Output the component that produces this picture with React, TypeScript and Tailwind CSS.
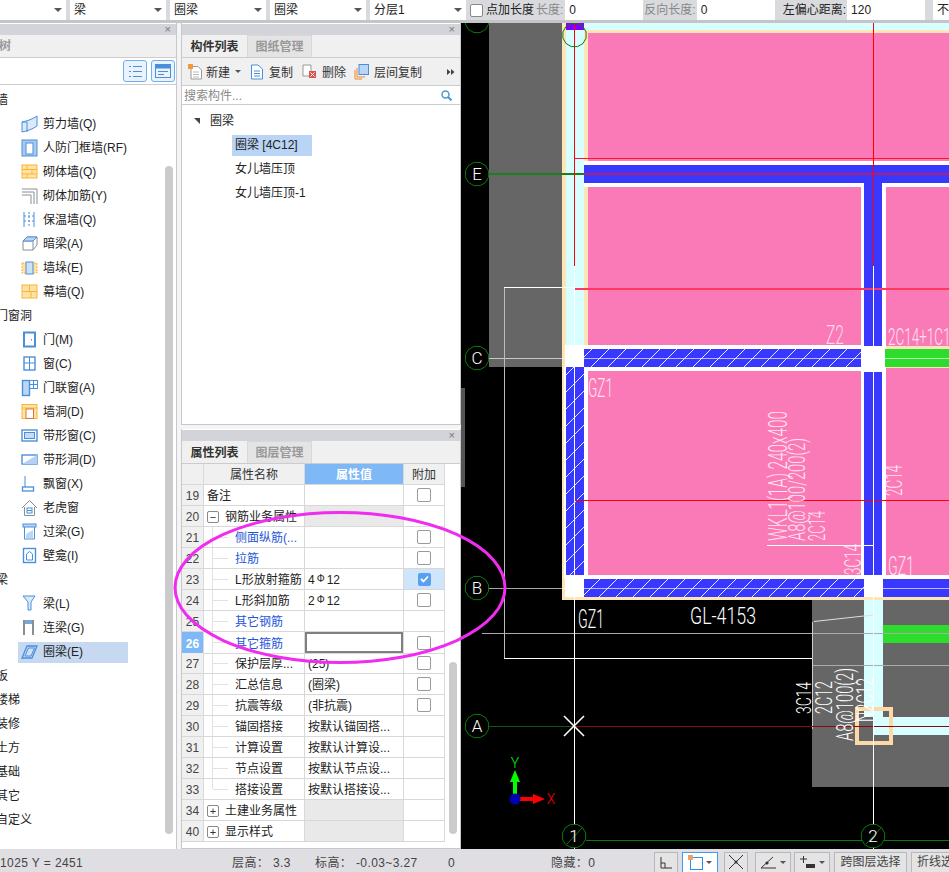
import type { ReactNode } from "react";

const BLUE = "#4a8fdc";
const ORANGE = "#fbb534";
const GRAY = "#8a8f96";

const Svg = ({ children, w = 18, h = 18 }: { children: ReactNode; w?: number; h?: number }) => (
  <svg width={w} height={h} viewBox="0 0 18 18" fill="none" className="shrink-0">
    {children}
  </svg>
);

const icons: Record<string, ReactNode> = {
  shear: (
    <Svg>
      <path d="M1 7 C6 6 12 4 16 1 V11 C12 14 6 16 1 17Z" fill="#dbe9f8" stroke={BLUE} />
      <path d="M1 7 H6 V17" stroke={BLUE} />
    </Svg>
  ),
  civil: (
    <Svg>
      <rect x="1" y="1" width="15" height="16" fill="#a9c9ee" stroke={BLUE} />
      <rect x="5" y="4" width="7" height="11" fill="#fff" stroke={BLUE} />
    </Svg>
  ),
  brick: (
    <Svg>
      <rect x="1" y="2" width="15" height="13" fill="#fde3a8" stroke={ORANGE} />
      <path d="M1 6.5 H16 M1 11 H16 M6 2 V6.5 M11 6.5 V11 M6 11 V15" stroke={ORANGE} />
    </Svg>
  ),
  rebar: (
    <Svg>
      <path d="M1 2 H16 V17 M1 5 H13 V17 M1 8 H10 V17" stroke={GRAY} />
    </Svg>
  ),
  insul: (
    <Svg>
      <path d="M3 1 V16 M13 1 V16" stroke={BLUE} />
      <path d="M8 1 V16 M3 5 H13 M3 10 H13" stroke={BLUE} strokeDasharray="2 2" />
    </Svg>
  ),
  hidden: (
    <Svg>
      <path d="M2 6 L6 2 H16 V10 L12 15 H2Z M2 6 H12 V15 M12 6 L16 2" stroke={GRAY} />
      <path d="M6 2 H16 L12 6 H2Z" fill="#bcd6f2" stroke={BLUE} />
    </Svg>
  ),
  pier: (
    <Svg>
      <rect x="1" y="4" width="15" height="10" fill="#fde3a8" stroke={ORANGE} strokeDasharray="2 1" />
      <rect x="5" y="3" width="7" height="12" fill="#cfe2f7" stroke={BLUE} />
    </Svg>
  ),
  curtain: (
    <Svg>
      <rect x="1" y="2" width="15" height="13" fill="#fde3a8" stroke={ORANGE} />
      <path d="M1 8.5 H16 M8.5 2 V8.5 M10 8.5 V15" stroke={ORANGE} />
    </Svg>
  ),
  door: (
    <Svg>
      <rect x="3" y="1.5" width="11" height="14" stroke={BLUE} strokeWidth="2" />
      <path d="M10.5 8 V9.5" stroke={BLUE} />
    </Svg>
  ),
  win: (
    <Svg>
      <rect x="3" y="2" width="11" height="13" stroke={BLUE} strokeWidth="1.4" />
      <path d="M8.5 2 V15 M3 8 H14" stroke={BLUE} />
    </Svg>
  ),
  doorwin: (
    <Svg>
      <rect x="1.5" y="1.5" width="7" height="15" fill="#bcd6f2" stroke={BLUE} strokeWidth="1.4" />
      <rect x="8.5" y="1.5" width="8" height="8" stroke={BLUE} />
      <path d="M12.5 1.5 V9.5 M8.5 5.5 H16.5" stroke={BLUE} />
    </Svg>
  ),
  opening: (
    <Svg>
      <rect x="1" y="1.5" width="15" height="14" fill="#fde3a8" stroke={ORANGE} />
      <path d="M1 5 H16" stroke={ORANGE} />
      <rect x="5" y="6" width="7.5" height="9.5" fill="#fff" stroke="#d9773a" />
    </Svg>
  ),
  strip: (
    <Svg>
      <rect x="1" y="3" width="15" height="11" stroke={BLUE} strokeWidth="1.4" />
      <rect x="3.5" y="5.5" width="10" height="6" fill="#c6dcf5" stroke={BLUE} />
    </Svg>
  ),
  stripHole: (
    <Svg>
      <rect x="1" y="4" width="15" height="9" stroke={BLUE} strokeWidth="1.4" />
      <path d="M1 13 L16 4 V13Z" fill="#b5d0f0" />
    </Svg>
  ),
  bay: (
    <Svg>
      <path d="M4 1 V12" stroke={BLUE} />
      <rect x="1.5" y="12" width="11" height="4" stroke={BLUE} strokeWidth="1.3" />
    </Svg>
  ),
  dormer: (
    <Svg>
      <path d="M1 9 L8.5 1.5 L16 9 M3.5 8 V16.5 H13.5 V8" stroke={GRAY} />
      <rect x="6" y="9" width="5" height="5" stroke={BLUE} />
      <path d="M6 11.5 H11" stroke={BLUE} />
    </Svg>
  ),
  lintel: (
    <Svg>
      <rect x="2" y="1" width="13" height="3" fill="#bcd6f2" stroke={BLUE} />
      <path d="M3.5 4 V16 H13.5 V4" stroke={BLUE} />
      <path d="M5 15 V11 L12 7 V15Z" fill="#bcd6f2" />
    </Svg>
  ),
  niche: (
    <Svg>
      <rect x="2.5" y="1.5" width="12" height="14" stroke={BLUE} strokeWidth="1.4" />
      <path d="M5.5 13 V7 L8.5 4.5 L11.5 7 V13Z" stroke={BLUE} />
    </Svg>
  ),
  beam: (
    <Svg>
      <path d="M2 1 H14 L10 7 V15 H7 V7Z" fill="#dbe9f8" stroke={BLUE} />
    </Svg>
  ),
  link: (
    <Svg>
      <rect x="2" y="1" width="11" height="4" fill="#7ba7d8" />
      <path d="M3 1 V16 M12 1 V16" stroke={GRAY} strokeWidth="2" />
    </Svg>
  ),
  ring: (
    <Svg>
      <path d="M1 15 L6 3 H16 L11 15Z" fill="#bcd6f2" stroke={BLUE} strokeWidth="1.3" />
      <path d="M4 13 L7.5 5 H13.5 L10 13Z" fill="#cfe0f3" stroke={BLUE} />
    </Svg>
  ),
};

const tree: { label: string; icon?: string; on?: boolean }[] = [
  { label: "墙" },
  { label: "剪力墙(Q)", icon: "shear" },
  { label: "人防门框墙(RF)", icon: "civil" },
  { label: "砌体墙(Q)", icon: "brick" },
  { label: "砌体加筋(Y)", icon: "rebar" },
  { label: "保温墙(Q)", icon: "insul" },
  { label: "暗梁(A)", icon: "hidden" },
  { label: "墙垛(E)", icon: "pier" },
  { label: "幕墙(Q)", icon: "curtain" },
  { label: "门窗洞" },
  { label: "门(M)", icon: "door" },
  { label: "窗(C)", icon: "win" },
  { label: "门联窗(A)", icon: "doorwin" },
  { label: "墙洞(D)", icon: "opening" },
  { label: "带形窗(C)", icon: "strip" },
  { label: "带形洞(D)", icon: "stripHole" },
  { label: "飘窗(X)", icon: "bay" },
  { label: "老虎窗", icon: "dormer" },
  { label: "过梁(G)", icon: "lintel" },
  { label: "壁龛(I)", icon: "niche" },
  { label: "梁" },
  { label: "梁(L)", icon: "beam" },
  { label: "连梁(G)", icon: "link" },
  { label: "圈梁(E)", icon: "ring", on: true },
  { label: "板" },
  { label: "楼梯" },
  { label: "装修" },
  { label: "土方" },
  { label: "基础" },
  { label: "其它" },
  { label: "自定义" },
];

type Row = {
  no: number;
  name: string;
  value?: ReactNode;
  kind?: "plain" | "group" | "child";
  open?: boolean;
  blue?: boolean;
  box?: boolean;
  checked?: boolean;
  active?: boolean;
};

const Rebar = ({ n }: { n: number }) => (
  <span>
    {n}
    <span className="relative -top-[2px] mx-[2px] text-[10px]">Φ</span>12
  </span>
);

const rows: Row[] = [
  { no: 19, name: "备注", kind: "plain", box: true },
  { no: 20, name: "钢筋业务属性", kind: "group", open: true },
  { no: 21, name: "侧面纵筋(...", kind: "child", blue: true, box: true },
  { no: 22, name: "拉筋", kind: "child", blue: true, box: true },
  { no: 23, name: "L形放射箍筋", kind: "child", value: <Rebar n={4} />, box: true, checked: true },
  { no: 24, name: "L形斜加筋", kind: "child", value: <Rebar n={2} />, box: true },
  { no: 25, name: "其它钢筋", kind: "child", blue: true },
  { no: 26, name: "其它箍筋", kind: "child", blue: true, box: true, active: true },
  { no: 27, name: "保护层厚...", kind: "child", value: "(25)", box: true },
  { no: 28, name: "汇总信息", kind: "child", value: "(圈梁)", box: true },
  { no: 29, name: "抗震等级", kind: "child", value: "(非抗震)", box: true },
  { no: 30, name: "锚固搭接", kind: "child", value: "按默认锚固搭..." },
  { no: 31, name: "计算设置", kind: "child", value: "按默认计算设..." },
  { no: 32, name: "节点设置", kind: "child", value: "按默认节点设..." },
  { no: 33, name: "搭接设置", kind: "child", value: "按默认搭接设..." },
  { no: 34, name: "土建业务属性", kind: "group" },
  { no: 40, name: "显示样式", kind: "group" },
];

const Caret = () => <span className="ml-auto mr-[4px] h-0 w-0 border-x-[4px] border-t-[4px] border-x-transparent border-t-[#555]" />;

const Combo = ({ w, text }: { w: string; text?: string }) => (
  <div className={`flex h-[20px] shrink-0 items-center bg-white pl-[4px] ${w}`}>
    <span>{text}</span>
    <Caret />
  </div>
);

const Input = ({ text, w = "w-[78px]" }: { text: string; w?: string }) => (
  <div className={`flex h-[20px] shrink-0 items-center bg-white pl-[4px] ${w}`}>{text}</div>
);

const PanelHead = () => (
  <div className="flex h-[11px] items-center justify-end bg-[#d3d4d9] pr-[5px] text-[11px] leading-none text-[#777]">×</div>
);

const Tab = ({ text, on }: { text: string; on?: boolean }) => (
  <div
    className={
      on
        ? "flex h-[22px] w-[65px] items-center justify-center pt-px font-bold text-[#333]"
        : "flex h-[22px] w-[65px] items-center justify-center border-x border-t border-[#d8d8d8] bg-[#e4e4e4] pt-px font-bold text-[#999]"
    }
  >
    {text}
  </div>
);

const Box = ({ checked }: { checked?: boolean }) =>
  checked ? (
    <span className="flex h-[13px] w-[13px] items-center justify-center rounded-[2px] bg-[#5a9ff0]">
      <svg width="9" height="8" viewBox="0 0 9 8" fill="none">
        <path d="M1 4 L3.5 6.5 L8 1.5" stroke="#fff" strokeWidth="1.8" />
      </svg>
    </span>
  ) : (
    <span className="h-[14px] w-[14px] rounded-[2px] border border-[#9a9a9a] bg-white" />
  );

const Expander = ({ open }: { open?: boolean }) => (
  <span className="mr-[6px] flex h-[12px] w-[12px] items-center justify-center rounded-[2px] border border-[#888] text-[11px] leading-none text-[#333]">
    {open ? "−" : "+"}
  </span>
);

const cell = "border-b border-r border-[#d8d8d8]";

const PropRow = ({ r }: { r: Row }) => (
  <div className="grid h-[21px] grid-cols-[22px_101px_99px_41px]">
    <div
      className={
        r.active
          ? `${cell} flex items-center justify-center bg-[#7eb8f7] pt-[2px] font-bold text-white`
          : `${cell} flex items-center justify-center bg-[#f0f0f0] pt-[2px] text-[#444]`
      }
    >
      {r.no}
    </div>
    <div className={`${cell} flex items-stretch overflow-hidden whitespace-nowrap`}>
      {r.kind === "child" ? (
        <div className="ml-[8px] flex items-center">
          <span className={r.no === 33 ? "h-1/2 w-px self-start bg-[#e2e2e2]" : "h-full w-px bg-[#e2e2e2]"} />
          <span className="h-px w-[15px] bg-[#e2e2e2]" />
          <span className={r.blue ? "ml-[7px] pt-[2px] text-[#1f55d8]" : "ml-[7px] pt-[2px] text-[#222]"}>{r.name}</span>
        </div>
      ) : (
        <div className="ml-[3px] flex items-center pt-[2px] text-[#222]">
          {r.kind === "group" && <Expander open={r.open} />}
          {r.name}
        </div>
      )}
    </div>
    <div className={`${cell} flex items-center whitespace-nowrap pl-[3px] text-[#222] ${r.kind === "group" ? "bg-[#e9e9e9]" : ""}`}>
      {r.active ? <div className="-ml-[3px] h-[21px] w-[100px] border-2 border-[#808080] bg-white" /> : <span className="pt-[2px]">{r.value}</span>}
    </div>
    <div className={`${cell} flex items-center justify-center ${r.checked ? "bg-[#cfe5fb]" : ""}`}>
      {r.box && <Box checked={r.checked} />}
    </div>
  </div>
);

const Cad = ({ x, y, w, size = 26, rot, fill = "#fff", children }: { x: number; y: number; w: number; size?: number; rot?: boolean; fill?: string; children: string }) => (
  <text
    x={x}
    y={y}
    fontSize={size}
    fontFamily="Roboto, 'Liberation Sans', sans-serif"
    fontWeight={300}
    fill={fill}
    textLength={w}
    lengthAdjust="spacingAndGlyphs"
    transform={rot ? `rotate(-90 ${x} ${y})` : undefined}
  >
    {children}
  </text>
);

const ring = (x: number, y: number, r: number) =>
  Array.from({ length: 12 }, (_, i) => {
    const a = (i * Math.PI) / 6 + Math.PI / 12;
    return `${x + r * Math.cos(a)},${y + r * Math.sin(a)}`;
  }).join(" ");

const Axis = ({ x, y, label, slash }: { x: number; y: number; label: string; slash?: boolean }) => (
  <g>
    <polygon points={ring(x, y, 12)} fill="#000" stroke="#0a7a0a" strokeWidth={1} />
    {slash && <line x1={x - 7} y1={y + 8} x2={x + 8} y2={y - 8} stroke="#0a7a0a" />}
    <text x={x} y={y + 6} textAnchor="middle" fontSize={17} fontFamily="Roboto, 'Liberation Sans', sans-serif" fontWeight={300} fill="#fff">
      {label}
    </text>
  </g>
);

const Drawing = () => (
  <svg viewBox="465 23 484 826" className="h-full w-full" preserveAspectRatio="none" shapeRendering="crispEdges">
    <defs>
      <pattern id="hatch" width="17" height="17" patternUnits="userSpaceOnUse" patternTransform="translate(4 2)">
        <rect width="17" height="17" fill="#3838ff" />
        <path d="M0 17 L17 0" stroke="#e8ecff" strokeWidth="1" shapeRendering="auto" />
      </pattern>
    </defs>
    <rect x="465" y="23" width="484" height="826" fill="#000" />
    <rect x="489" y="23" width="73" height="344" fill="#666" />
    <rect x="812" y="600" width="137" height="187" fill="#666" />

    <rect x="562" y="23" width="387" height="577" fill="#fde5b8" />
    <rect x="566" y="23" width="18" height="574" fill="#d8ffff" />
    <rect x="584" y="23" width="365" height="7" fill="#d8ffff" />
    <rect x="566" y="23" width="18" height="7" fill="#8000ff" />
    <rect x="588" y="33" width="361" height="128" fill="#f97ab6" />
    <rect x="588" y="187" width="273" height="159" fill="#f97ab6" />
    <rect x="886" y="187" width="63" height="159" fill="#f97ab6" />
    <rect x="588" y="371" width="273" height="204" fill="#f97ab6" />
    <rect x="886" y="368" width="63" height="207" fill="#f97ab6" />

    <rect x="584" y="161" width="365" height="26" fill="#fff" />
    <rect x="584" y="165" width="365" height="18" fill="#3838ff" />
    <rect x="861" y="183" width="25" height="166" fill="#fff" />
    <rect x="864" y="183" width="18" height="166" fill="#3838ff" />
    <rect x="565" y="345" width="297" height="26" fill="#fff" />
    <rect x="584" y="349" width="278" height="18" fill="url(#hatch)" />
    <rect x="564" y="367" width="24" height="212" fill="#fff" />
    <rect x="566" y="367" width="18" height="211" fill="url(#hatch)" />
    <rect x="861" y="346" width="25" height="233" fill="#fff" />
    <rect x="864" y="372" width="18" height="206" fill="#3838ff" />
    <rect x="885" y="349" width="64" height="18" fill="#2edc2e" />
    <rect x="565" y="575" width="384" height="22" fill="#fff" />
    <rect x="584" y="579" width="280" height="18" fill="url(#hatch)" />
    <rect x="883" y="579" width="66" height="18" fill="#3838ff" />

    <rect x="864" y="600" width="19" height="117" fill="#d8ffff" />
    <rect x="873" y="717" width="76" height="18" fill="#d8ffff" />
    <rect x="883" y="625" width="66" height="18" fill="#2edc2e" />
    <rect x="857" y="709" width="34" height="34" stroke="#fdd9a8" strokeWidth="4" fill="none" />

    {/* axes and construction lines */}
    <line x1="465" x2="949" y1="358.5" y2="358.5" stroke="#fff" strokeOpacity="0.65" />
    <line x1="465" x2="949" y1="588.5" y2="588.5" stroke="#fff" strokeOpacity="0.65" />
    <line x1="482" x2="949" y1="633.5" y2="633.5" stroke="#aaa" />
    <line x1="812" x2="949" y1="665.5" y2="665.5" stroke="#aaa" />
    <line x1="504.5" x2="504.5" y1="288" y2="658" stroke="#bbb" />
    <line x1="504" x2="575" y1="287.5" y2="287.5" stroke="#fff" />
    <line x1="504" x2="812" y1="658.5" y2="658.5" stroke="#fff" />
    <line x1="812.5" x2="812.5" y1="622" y2="729" stroke="#ccc" />
    <path d="M814 621.5 L873 615" stroke="#ddd" shapeRendering="auto" />

    <line x1="489" x2="584" y1="174" y2="174" stroke="#1f7f1f" strokeWidth="2" />
    <line x1="584" x2="949" y1="174" y2="174" stroke="#b02070" strokeWidth="2" />
    <line x1="575" x2="949" y1="158.5" y2="158.5" stroke="#ff1030" />
    <line x1="575" x2="949" y1="289" y2="289" stroke="#ff3860" strokeWidth="2" />
    <line x1="575" x2="949" y1="500.5" y2="500.5" stroke="#f00" />
    <line x1="489" x2="574" y1="726" y2="726" stroke="#0a5c0a" />
    <line x1="574" x2="949" y1="726" y2="726" stroke="#8a0a0a" />
    <line x1="586" x2="949" y1="840.5" y2="840.5" stroke="#0a7a0a" />
    <line x1="574.5" x2="574.5" y1="23" y2="266" stroke="#f00" />
    <line x1="873.5" x2="873.5" y1="23" y2="266" stroke="#f00" />
    <line x1="574.5" x2="574.5" y1="266" y2="849" stroke="#fff" />
    <line x1="873.5" x2="873.5" y1="266" y2="849" stroke="#fff" />
    <line x1="767" x2="873" y1="545.5" y2="545.5" stroke="#fff" />
    <path d="M564 716 L584 736 M584 716 L564 736" stroke="#fff" strokeWidth="1.6" shapeRendering="auto" />

    <g shapeRendering="auto">
      <polygon points={ring(477, 21, 12)} fill="none" stroke="#0a7a0a" />
      <polygon points={ring(574.5, 35, 12)} fill="none" stroke="#0a7a0a" />
      <Axis x={477} y={174} label="E" />
      <Axis x={477} y={358} label="C" />
      <Axis x={477} y={588} label="B" />
      <Axis x={477} y={726} label="A" />
      <Axis x={574} y={836} label="1" slash />
      <Axis x={873} y={836} label="2" slash />

      <Cad x={826} y={344} w={18} size={25} fill="#ffd6ea">Z2</Cad>
      <Cad x={888} y={345} w={70} size={23} fill="#ffe4f0">2C14+1C14</Cad>
      <Cad x={588} y={397} w={25} fill="#ffe4f0">GZ1</Cad>
      <Cad x={787} y={541} w={130} size={25} rot fill="#ffe4f0">WKL1(1A) 240x400</Cad>
      <Cad x={805} y={541} w={103} size={24} rot fill="#ffe4f0">A8@100/200(2)</Cad>
      <Cad x={825} y={541} w={30} size={24} rot fill="#ffe4f0">2C14</Cad>
      <Cad x={861} y={575} w={31} size={24} rot fill="#ffe4f0">3C14</Cad>
      <Cad x={902} y={496} w={31} size={24} rot fill="#ffe4f0">2C14</Cad>
      <Cad x={888} y={575} w={26} fill="#ffe4f0">GZ1</Cad>
      <Cad x={578} y={628} w={26}>GZ1</Cad>
      <Cad x={690} y={624} w={66} size={23}>GL-4153</Cad>
      <Cad x={811} y={714} w={32} size={21} rot>3C14</Cad>
      <Cad x={832} y={714} w={33} size={23} rot>2C12</Cad>
      <Cad x={853} y={741} w={73} size={24} rot>A8@100(2)</Cad>
      <Cad x={873} y={722} w={44} size={24} rot>N2C12</Cad>

      <path d="M515 794 V782" stroke="#0f0" strokeWidth="4" />
      <path d="M515 770 L510 782 H520Z" fill="#0f0" />
      <path d="M520 799 H534" stroke="#f00" strokeWidth="4" />
      <path d="M533 794 L545 799 L533 804Z" fill="#f00" />
      <circle cx="515" cy="799" r="5.5" fill="#0000b0" />
      <text x="515" y="768" textAnchor="middle" fontSize="14" fontFamily="Roboto, sans-serif" fontWeight={300} fill="#0f0">Y</text>
      <text x="551" y="804" textAnchor="middle" fontSize="14" fontFamily="Roboto, sans-serif" fontWeight={300} fill="#f00">X</text>
    </g>
  </svg>
);

const ToolBtn = ({ w, on, drop, children }: { w: string; on?: boolean; drop?: boolean; children: ReactNode }) => (
  <div
    className={`flex h-[21px] shrink-0 items-center justify-center gap-[3px] border ${w} ${
      on ? "border-[#3d9bf0] bg-white" : "border-[#b8b8b8] bg-[#e4e4e4]"
    }`}
  >
    {children}
    {drop && <span className="h-0 w-0 border-x-[3px] border-t-[3px] border-x-transparent border-t-[#555]" />}
  </div>
);

export default function App() {
  return (
    <div className="relative flex h-[872px] w-[949px] flex-col overflow-hidden bg-[#f4f4f4] font-['Liberation_Sans','Noto_Sans_CJK_SC',sans-serif] text-[12px] text-[#222]">
      {/* Top property toolbar */}
      <div className="flex h-[23px] shrink-0 items-start gap-[4px] overflow-hidden whitespace-nowrap border-b-[3px] border-[#c4c5c9] bg-[#d9dade]">
        <Combo w="w-[66px]" />
        <Combo w="w-[96px]" text="梁" />
        <Combo w="w-[96px]" text="圈梁" />
        <Combo w="w-[96px]" text="圈梁" />
        <Combo w="w-[96px]" text="分层1" />
        <div className="flex h-[20px] shrink-0 items-center">
          <span className="h-[13px] w-[13px] rounded-[2px] border border-[#888] bg-white" />
          <span className="ml-[3px]">点加长度</span>
          <span className="ml-[2px] mr-[2px] text-[#888]">长度:</span>
          <Input text="0" />
          <span className="ml-[1px] mr-[1px] text-[#888]">反向长度:</span>
          <Input text="0" />
          <span className="ml-[8px] mr-[1px]">左偏心距离:</span>
          <Input text="120" />
          <Input text="不偏移" w="ml-[8px] w-[60px]" />
        </div>
      </div>

      <div className="flex min-h-0 flex-1">
        {/* Left: module tree */}
        <div className="relative flex w-[177px] shrink-0 flex-col border-r border-[#c8c8cc] bg-white">
          <div className="mt-px"><PanelHead /></div>
          <div className="flex h-[23px] items-center border-b border-[#ccc] bg-[#f0f0f0] font-bold text-[#999]">
            <span className="-ml-[1px]">树</span>
          </div>
          <div className="flex h-[27px] items-center justify-end gap-[4px] border-b border-[#ccc] pr-[1px]">
            <span className="flex h-[22px] w-[24px] items-center justify-center rounded-[3px] border border-[#6bb0f0] bg-[#eaf3fd]">
              <svg width="15" height="13" viewBox="0 0 15 13" fill="none">
                <path d="M1 1.5 H3 M1 6.5 H3 M1 11.5 H3 M5 1.5 H14 M5 6.5 H14 M5 11.5 H14" stroke="#4a8fdc" />
              </svg>
            </span>
            <span className="flex h-[22px] w-[24px] items-center justify-center rounded-[3px] border border-[#6bb0f0] bg-[#eaf3fd]">
              <svg width="16" height="14" viewBox="0 0 16 14" fill="none">
                <rect x="0.5" y="0.5" width="15" height="13" stroke="#4a8fdc" />
                <rect x="0.5" y="0.5" width="15" height="4" fill="#4a8fdc" />
                <path d="M3 7.5 H13 M3 10.5 H9" stroke="#4a8fdc" />
              </svg>
            </span>
          </div>
          <div className="flex-1 overflow-hidden pt-[3px]">
            {tree.map((t) =>
              t.icon ? (
                <div key={t.label} className="flex h-[24px] items-center pl-[18px]">
                  <div className={`flex h-[21px] w-[110px] items-center gap-[3px] whitespace-nowrap pl-[3px] ${t.on ? "bg-[#c6d9f1]" : ""}`}>
                    {icons[t.icon]}
                    <span className="ml-[1px]">{t.label}</span>
                  </div>
                </div>
              ) : (
                <div key={t.label} className="-ml-[4px] flex h-[24px] items-center">
                  {t.label}
                </div>
              )
            )}
          </div>
          <div className="absolute right-[3px] top-[143px] h-[668px] w-[8px] rounded-[4px] bg-[#cbcbcb]" />
        </div>

        <div className="w-[4px] shrink-0" />

        {/* Middle: component list + properties */}
        <div className="flex w-[280px] shrink-0 flex-col gap-[4px]">
          <div className="flex h-[402px] shrink-0 flex-col border-x border-b border-[#c8c8cc] bg-white">
            <div className="mt-px"><PanelHead /></div>
            <div className="flex h-[23px] border-b border-[#ccc] bg-[#f0f0f0]">
              <Tab text="构件列表" on />
              <Tab text="图纸管理" />
            </div>
            <div className="flex h-[28px] items-center whitespace-nowrap border-b border-[#ccc] bg-[#f0f0f0] pl-[6px] text-[#333]">
              <svg width="15" height="16" viewBox="0 0 15 16" fill="none">
                <path d="M3 2.5 H10 L13.5 6 V15 H3Z" fill="#fff" stroke="#9a9a9a" />
                <path d="M5 8 H11 M5 10.5 H11 M5 13 H11" stroke="#bbb" />
                <rect x="0" y="0" width="5" height="5" fill="#f59a3c" />
              </svg>
              <span className="ml-[3px] pt-[2px]">新建</span>
              <span className="ml-[5px] h-0 w-0 border-x-[3px] border-t-[3px] border-x-transparent border-t-[#555]" />
              <svg className="ml-[9px]" width="14" height="16" viewBox="0 0 14 16" fill="none">
                <path d="M1.5 1 H8 L12.5 5 V15 H1.5Z" fill="#fff" stroke="#4a8fdc" />
                <path d="M4 7 H10 M4 9.5 H10 M4 12 H10" stroke="#4a8fdc" />
              </svg>
              <span className="ml-[5px] pt-[2px]">复制</span>
              <svg className="ml-[9px]" width="15" height="15" viewBox="0 0 15 15" fill="none">
                <path d="M1 1 H9 V12 H1Z" fill="#fff" stroke="#999" />
                <rect x="7" y="7" width="7" height="7" fill="#d9534f" />
                <path d="M8.5 8.5 L12.5 12.5 M12.5 8.5 L8.5 12.5" stroke="#fff" />
              </svg>
              <span className="ml-[5px] pt-[2px]">删除</span>
              <svg className="ml-[8px]" width="15" height="16" viewBox="0 0 15 16" fill="none">
                <path d="M1 6 V15 H8 M3 4 V13 H11" stroke="#f0882c" />
                <rect x="5" y="0.5" width="9.5" height="10" fill="#b9d6f6" stroke="#4a8fdc" />
              </svg>
              <span className="ml-[5px] pt-[2px]">层间复制</span>
              <svg className="ml-auto mr-[5px]" width="8" height="6" viewBox="0 0 8 6" fill="#444">
                <path d="M0 0 L3.5 3 L0 6Z M4 0 L7.5 3 L4 6Z" />
              </svg>
            </div>
            <div className="flex h-[19px] items-center justify-between border-b border-[#ccc] px-[2px] text-[#8a8a8a]">
              <span className="pt-[2px]">搜索构件...</span>
              <svg className="mr-[6px]" width="11" height="11" viewBox="0 0 11 11" fill="none">
                <circle cx="4.5" cy="4.5" r="3.5" stroke="#4a9ad8" strokeWidth="1.5" />
                <path d="M7 7 L10.5 10.5" stroke="#4a9ad8" strokeWidth="2" />
              </svg>
            </div>
            <div className="flex flex-col pt-[4px]">
              <div className="flex h-[24px] items-center pl-[12px]">
                <span className="h-0 w-0 border-l-[6px] border-t-[6px] border-l-transparent border-t-[#444]" />
                <span className="ml-[10px]">圈梁</span>
              </div>
              <div className="flex h-[24px] items-center pl-[50px]">
                <span className="flex h-[21px] w-[80px] items-center bg-[#b9d4f4] pl-[3px]">圈梁 [4C12]</span>
              </div>
              <div className="flex h-[24px] items-center pl-[53px]">女儿墙压顶</div>
              <div className="flex h-[24px] items-center pl-[53px]">女儿墙压顶-1</div>
            </div>
          </div>

          <div className="relative flex min-h-0 flex-1 flex-col border-x border-b border-[#c8c8cc] bg-white">
            <div className="mt-px"><PanelHead /></div>
            <div className="flex h-[23px] border-b border-[#ccc] bg-[#f0f0f0]">
              <Tab text="属性列表" on />
              <Tab text="图层管理" />
            </div>
            <div className="grid h-[21px] grid-cols-[22px_101px_99px_41px]">
              <div className={`${cell} bg-[#f0f0f0]`} />
              <div className={`${cell} flex items-center justify-center bg-[#f0f0f0] pt-[2px] text-[#333]`}>属性名称</div>
              <div className={`${cell} flex items-center justify-center bg-[#7eb8f7] pt-[2px] font-bold text-white`}>属性值</div>
              <div className={`${cell} flex items-center justify-center bg-[#f0f0f0] pt-[2px] text-[#333]`}>附加</div>
            </div>
            {rows.map((r) => (
              <PropRow key={r.no} r={r} />
            ))}
            <div className="absolute right-[3px] top-[233px] h-[172px] w-[8px] rounded-[4px] bg-[#cbcbcb]" />
          </div>
        </div>

        {/* Splitter */}
        <div className="flex w-[4px] shrink-0 flex-col bg-black">
          <div className="mt-[365px] h-[99px] bg-[#555]" />
        </div>

        {/* CAD canvas */}
        <div className="min-w-0 flex-1">
          <Drawing />
        </div>
      </div>

      {/* Status bar */}
      <div className="flex h-[23px] shrink-0 items-center overflow-hidden whitespace-nowrap bg-[#dfdfe3] tracking-[0.4px] text-[#444]">
        <span className="w-[232px] shrink-0 pt-[5px]">1025 Y = 2451</span>
        <span className="w-[83px] shrink-0 pt-[5px]">层高： 3.3</span>
        <span className="w-[133px] shrink-0 pt-[5px]">标高： -0.03~3.27</span>
        <span className="w-[103px] shrink-0 pt-[5px]">0</span>
        <span className="w-[103px] shrink-0 pt-[5px]">隐藏：0</span>
        <div className="flex items-center gap-[4px] pt-[3px] tracking-normal">
          <ToolBtn w="w-[24px]">
            <svg width="13" height="13" viewBox="0 0 13 13" fill="none"><path d="M1 1 V12 H12 M1 7 H5 V12" stroke="#333" /></svg>
          </ToolBtn>
          <ToolBtn w="w-[36px]" on drop>
            <svg width="15" height="15" viewBox="0 0 15 15" fill="none">
              <rect x="2.5" y="2.5" width="12" height="12" stroke="#2f8fe0" />
              <rect x="0" y="0" width="5" height="5" fill="#f0a060" />
            </svg>
          </ToolBtn>
          <ToolBtn w="w-[24px] ml-[2px]">
            <svg width="16" height="16" viewBox="0 0 16 16" fill="none"><path d="M1 1 L15 15 M15 1 L1 15" stroke="#333" /><circle cx="8" cy="8" r="1.5" fill="#333" /></svg>
          </ToolBtn>
          <ToolBtn w="w-[36px] ml-[3px]" drop>
            <svg width="17" height="14" viewBox="0 0 17 14" fill="none"><path d="M1 13 H16 M1 13 L13 2" stroke="#333" /><circle cx="7" cy="8" r="1.6" fill="#333" /></svg>
          </ToolBtn>
          <ToolBtn w="w-[36px] -ml-[1px]" drop>
            <svg width="17" height="14" viewBox="0 0 17 14" fill="none"><path d="M1 4 H8 M4.5 1 V8" stroke="#333" /><rect x="7" y="9" width="9" height="4" fill="#333" /></svg>
          </ToolBtn>
          <ToolBtn w="w-[73px]">跨图层选择</ToolBtn>
          <ToolBtn w="w-[60px]">折线选择</ToolBtn>
        </div>
      </div>

      {/* Hand-drawn annotation over the property table and canvas */}
      <svg className="pointer-events-none absolute left-[170px] top-[505px]" width="342" height="165" viewBox="170 505 342 165" fill="none">
        <ellipse cx="340" cy="587.5" rx="165" ry="75" stroke="#f02cf0" strokeWidth="3" />
      </svg>
    </div>
  );
}
